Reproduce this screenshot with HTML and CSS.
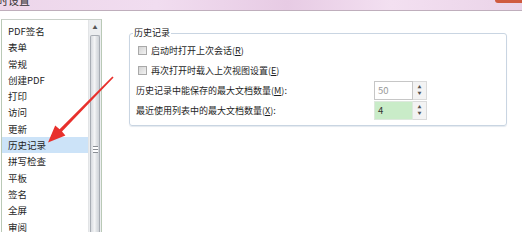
FILE: index.html
```html
<!DOCTYPE html>
<html lang="zh">
<head>
  <meta charset="UTF-8" />
  <title>首选项设置</title>
  <link rel="stylesheet" href="styles.css">
</head>
<body>
  <div class="titlebar">
    <span class="title">时设置</span>
    <span class="close"></span>
  </div>

  <div class="main">
    <div class="navlist">
      <ul class="items">
        <li>PDF签名</li>
        <li>表单</li>
        <li>常规</li>
        <li>创建PDF</li>
        <li>打印</li>
        <li>访问</li>
        <li>更新</li>
        <li class="selected">历史记录</li>
        <li>拼写检查</li>
        <li>平板</li>
        <li>签名</li>
        <li>全屏</li>
        <li>审阅</li>
      </ul>
      <div class="scrollbar">
        <div class="scroll-up">&#9650;</div>
        <div class="thumb"><span class="grip"></span></div>
      </div>
    </div>

    <fieldset class="group">
      <legend>历史记录</legend>
      <div class="row">
        <span class="check"></span>
        <span>启动时打开上次会话(<u>R</u>)</span>
      </div>
      <div class="row">
        <span class="check"></span>
        <span>再次打开时载入上次视图设置(<u>E</u>)</span>
      </div>
      <div class="row">
        <span class="label">历史记录中能保存的最大文档数量(<u>M</u>):</span>
        <div class="spin">
          <span class="spin-value muted">50</span>
          <span class="spin-buttons"><i>&#9650;</i><i>&#9660;</i></span>
        </div>
      </div>
      <div class="row">
        <span class="label">最近使用列表中的最大文档数量(<u>X</u>):</span>
        <div class="spin">
          <span class="spin-value active">4</span>
          <span class="spin-buttons"><i>&#9650;</i><i>&#9660;</i></span>
        </div>
      </div>
    </fieldset>

    <svg class="arrow" width="522" height="232" viewBox="0 0 522 232">
      <polygon fill="#e8302c" points="112.4,76.4 113.6,77.6 62,131.4 65.4,135.4 48,142.5 55.2,125.4 59.6,129.2" />
    </svg>
  </div>
</body>
</html>
```

FILE: styles.css
```css
html, body {
  margin: 0;
  padding: 0;
}

body {
  width: 522px;
  height: 232px;
  overflow: hidden;
  background: #fff;
  color: #1e1e1e;
  font-family: "Noto Sans CJK SC", "Noto Sans", sans-serif;
  font-size: 9px;
}

.titlebar {
  display: flex;
  justify-content: space-between;
  align-items: flex-start;
  height: 10px;
  overflow: hidden;
  background: linear-gradient(to right, #edd6ea, #f1ddf0 30%, #e7cbe4 55%, #f3e0f1 75%, #ead3e8);
  border-bottom: 1px solid #bfaebc;
}

.title {
  margin-top: -7px;
  margin-left: -3px;
  font-size: 11px;
  line-height: 14px;
  color: #333;
}

.close {
  width: 27px;
  height: 3px;
  background: #cf5a3f;
  border-radius: 0 0 0 3px;
}

.main {
  position: relative;
  display: flex;
  align-items: flex-start;
}

.navlist {
  display: flex;
  margin-top: 8px;
  margin-left: 1px;
  width: 101px;
  height: 230px;
  box-sizing: border-box;
  border: 1px solid #b9c9b6;
  border-top-color: #c9d0c9;
}

.items {
  list-style: none;
  margin: 0;
  padding: 3px 0 0 0;
  width: 86px;
  font-size: 9.5px;
}

.items li {
  height: 16.3px;
  line-height: 16.3px;
  padding-left: 6px;
  white-space: nowrap;
}

.items li.selected {
  background: #cce3f8;
}

.scrollbar {
  width: 13px;
  background: #eceef0;
  border-left: 1px solid #e2e4e6;
  box-sizing: border-box;
}

.scroll-up {
  height: 13px;
  font-size: 5px;
  line-height: 13px;
  text-align: center;
  color: #555;
}

.thumb {
  margin: 2px 1px 0 1px;
  height: 200px;
  border: 1px solid #a8adb4;
  border-bottom: none;
  border-radius: 2px 2px 0 0;
  background: linear-gradient(to right, #d8dbdf, #f4f5f6 45%, #dfe2e5 70%, #cfd3d8);
  display: flex;
  justify-content: center;
}

.grip {
  margin-top: 110px;
  width: 5px;
  height: 5px;
  border-top: 1px solid #8a8e94;
  border-bottom: 1px solid #8a8e94;
  background: linear-gradient(#fff 40%, #8a8e94 40%, #8a8e94 60%, #fff 60%);
}

.group {
  margin: 17px 0 0 27px;
  width: 378px;
  box-sizing: border-box;
  padding: 2px 6px 5px 6px;
  border: 1px solid #c9d5e2;
  border-radius: 3px;
  box-shadow: 0 1px 1px #e4e9ef;
  min-width: 0;
}

.group legend {
  margin-left: -3px;
  padding: 0 1px;
  font-size: 9px;
  line-height: 10px;
  color: #222;
}

.row {
  display: flex;
  align-items: center;
  height: 20px;
  white-space: nowrap;
}

.check {
  width: 7px;
  height: 7px;
  margin-left: 2px;
  margin-right: 4px;
  border: 1px solid #a9a9a9;
  background: linear-gradient(135deg, #d4d4d4, #f2f2f2);
}

.label {
  width: 238px;
}

.spin {
  display: flex;
  width: 53px;
  height: 19px;
  box-sizing: border-box;
}

.spin-value {
  width: 39px;
  box-sizing: border-box;
  border: 1px solid #c6c6c6;
  padding-left: 3px;
  line-height: 17px;
  font-size: 9.5px;
}

.spin-value.muted {
  background: #fff;
  color: #9a9a9a;
}

.spin-value.active {
  background: #c9ecc8;
  border-color: #dde8dd;
  color: #333;
}

.spin-buttons {
  display: flex;
  flex-direction: column;
  justify-content: center;
  width: 14px;
  box-sizing: border-box;
  background: #f3f3f3;
  border: 1px solid #dadada;
  border-left: none;
}

.spin-buttons i {
  font-style: normal;
  font-size: 4px;
  line-height: 6px;
  text-align: center;
  color: #555;
}

.arrow {
  position: absolute;
  left: 0;
  top: -11px;
  pointer-events: none;
}
```
